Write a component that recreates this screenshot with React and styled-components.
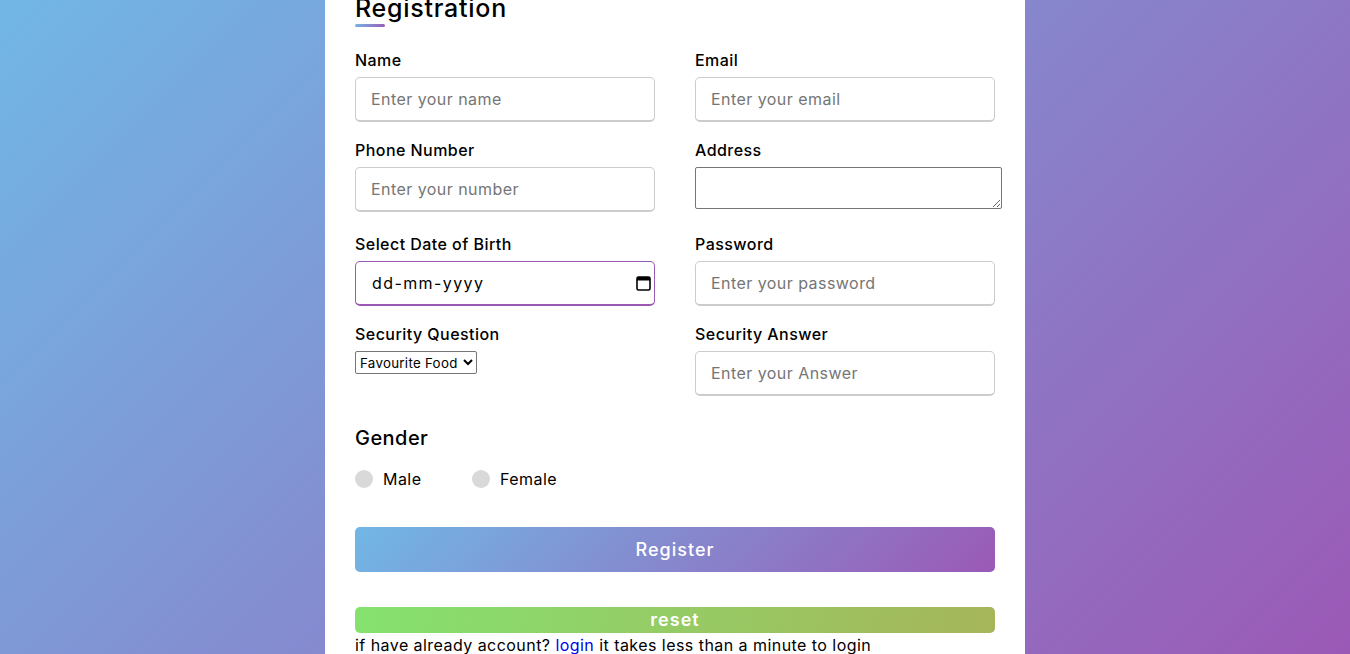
import React from 'react'
import styled, { createGlobalStyle } from 'styled-components'

const Global = createGlobalStyle`
    *{
        margin: 0;
        padding: 0;
        box-sizing: border-box;
        font-family: 'Inter', 'Open Sans', sans-serif;
    }
    body{
        overflow: hidden;
    }
`

const Page = styled.div`
    width: 100%;
    height: 100vh;
    overflow: hidden;
    display: flex;
    justify-content: center;
    background: linear-gradient(135deg, #71b7e6, #9b59b6);
`

const Card = styled.div`
    width: 700px;
    margin-top: -35px;
    align-self: flex-start;
    background: #fff;
    padding: 25px 30px;
    border-radius: 5px;
    letter-spacing: 0.45px;
`

const Title = styled.div`
    position: relative;
    font-size: 25px;
    font-weight: 500;
    line-height: 37px;
    letter-spacing: 0.75px;
    color: #000;

    &::before{
        content: '';
        position: absolute;
        left: 0;
        bottom: 0;
        height: 3px;
        width: 30px;
        border-radius: 5px;
        background: linear-gradient(135deg, #71b7e6, #9b59b6);
    }
`

const Details = styled.div`
    display: flex;
    flex-wrap: wrap;
    justify-content: space-between;
    margin: 21px 0 11px 0;
`

const Box = styled.div`
    width: 300px;
    margin-bottom: ${p => p.extra ? 20 : 16}px;
`

const Label = styled.span`
    display: block;
    font-size: 16px;
    font-weight: 500;
    line-height: 24px;
    margin-bottom: 5px;
    color: #000;
`

const Input = styled.input`
    display: block;
    height: 45px;
    width: 100%;
    outline: none;
    font-size: 16px;
    letter-spacing: 0.45px;
    border-radius: 5px;
    padding-left: 15px;
    border: 1px solid #ccc;
    border-bottom-width: 2px;
    color: #000;

    &::placeholder{
        color: #757575;
    }
`

const Area = styled.textarea`
    display: block;
    width: 307px;
    height: 42px;
    border: 1px solid #767676;
    border-radius: 2px;
    font-size: 13px;
    padding: 2px;
`

const DateBox = styled.div`
    display: flex;
    align-items: center;
    height: 45px;
    width: 100%;
    border-radius: 5px;
    border: 1px solid #9b59b6;
    border-bottom-width: 2px;
    padding: 0 3px 0 16px;

    input{
        flex: 1;
        min-width: 0;
        border: none;
        outline: none;
        font-size: 16px;
        letter-spacing: 1.4px;
        color: #000;
        background: transparent;
    }
    svg{
        width: 15px;
        height: 16px;
    }
`

const Select = styled.select`
    display: block;
    margin-top: 3px;
    width: 122px;
    height: 23px;
    font-size: 13.3px;
    letter-spacing: 0.3px;
    border: 1px solid #767676;
    border-radius: 2px;
    color: #000;
    background: #fff;
`

const GenderTitle = styled.div`
    font-size: 20px;
    font-weight: 500;
    line-height: 30px;
    color: #000;
`

const Category = styled.div`
    display: flex;
    margin: 14px 0;
`

const Option = styled.label`
    display: flex;
    align-items: center;
    width: ${p => p.w}px;
    font-size: 16px;
    line-height: 24px;
    color: #000;

    .dot{
        width: 18px;
        height: 18px;
        border-radius: 50%;
        margin-right: 10px;
        background: #d9d9d9;
    }
`

const Button = styled.button`
    display: block;
    width: 100%;
    height: ${p => p.h}px;
    margin-top: ${p => p.gap}px;
    border: none;
    border-radius: 5px;
    color: #fff;
    font-size: 18px;
    font-weight: ${p => p.bold ? 600 : 500};
    letter-spacing: 1px;
    line-height: ${p => p.h}px;
    background: ${p => p.bg};
`

const Note = styled.p`
    font-size: 16px;
    line-height: 24px;
    color: #000;

    a{
        color: #0000ee;
        text-decoration: none;
    }
`

function CalendarIcon() {
    return (
        <svg viewBox="0 0 15 16">
            <rect x="1" y="2" width="13" height="13" rx="1.5" fill="none" stroke="#000" strokeWidth="1.6" />
            <rect x="1" y="2" width="13" height="3.5" fill="#000" />
        </svg>
    )
}

export default function App() {
    return (
        <Page>
            <Global />
            <Card>
                <Title>Registration</Title>
                <form onSubmit={e => e.preventDefault()}>
                    <Details>
                        <Box>
                            <Label>Name</Label>
                            <Input type="text" placeholder="Enter your name" />
                        </Box>
                        <Box>
                            <Label>Email</Label>
                            <Input type="text" placeholder="Enter your email" />
                        </Box>
                        <Box extra>
                            <Label>Phone Number</Label>
                            <Input type="text" placeholder="Enter your number" />
                        </Box>
                        <Box extra>
                            <Label>Address</Label>
                            <Area />
                        </Box>
                        <Box>
                            <Label>Select Date of Birth</Label>
                            <DateBox>
                                <input type="text" readOnly value="dd-mm-yyyy" />
                                <CalendarIcon />
                            </DateBox>
                        </Box>
                        <Box>
                            <Label>Password</Label>
                            <Input type="password" placeholder="Enter your password" />
                        </Box>
                        <Box>
                            <Label>Security Question</Label>
                            <Select defaultValue="food">
                                <option value="food">Favourite Food</option>
                                <option value="pet">First Pet</option>
                            </Select>
                        </Box>
                        <Box>
                            <Label>Security Answer</Label>
                            <Input type="text" placeholder="Enter your Answer" />
                        </Box>
                    </Details>
                    <GenderTitle>Gender</GenderTitle>
                    <Category>
                        <Option w={117}><span className="dot"></span>Male</Option>
                        <Option w={120}><span className="dot"></span>Female</Option>
                    </Category>
                    <Button h={45} gap={36} bg="linear-gradient(135deg, #71b7e6, #9b59b6)">Register</Button>
                    <Button h={26} gap={35} bold bg="linear-gradient(100deg, #85e26f, #a6b55a)">reset</Button>
                    <Note>if have already account? <a href="#">login</a> it takes less than a minute to login</Note>
                </form>
            </Card>
        </Page>
    )
}
